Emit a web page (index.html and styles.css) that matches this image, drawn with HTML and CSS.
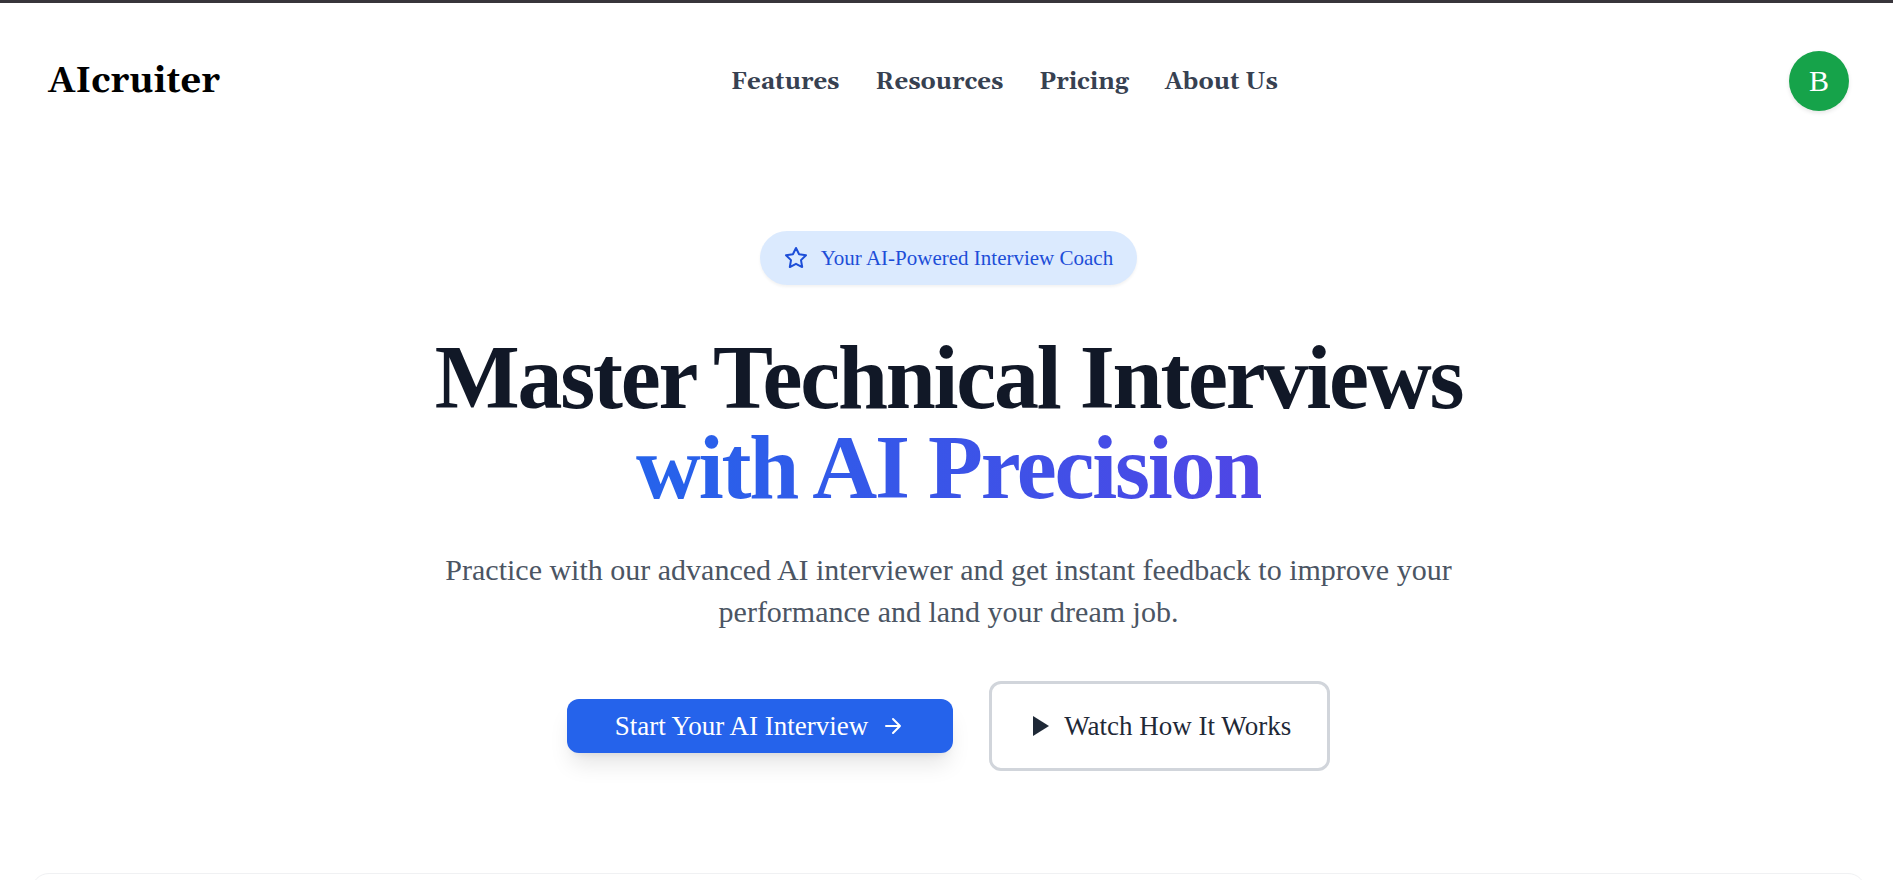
FILE: index.html
```html
<!DOCTYPE html>
<html lang="en">
<head>
<meta charset="utf-8">
<title>AIcruiter</title>
<link rel="stylesheet" href="styles.css">
</head>
<body>
<header class="header">
  <a class="logo" href="#">AIcruiter</a>
  <nav class="nav">
    <a href="#">Features</a>
    <a href="#">Resources</a>
    <a href="#">Pricing</a>
    <a href="#">About Us</a>
  </nav>
  <button class="avatar" type="button">B</button>
</header>
<main class="main">
  <section class="hero">
    <div class="badge">
      <svg class="star" viewBox="0 0 24 24" aria-hidden="true"><polygon points="12 2 15.09 8.26 22 9.27 17 14.14 18.18 21.02 12 17.77 5.82 21.02 7 14.14 2 9.27 8.91 8.26 12 2"/></svg>
      <span>Your AI-Powered Interview Coach</span>
    </div>
    <h1 class="title">Master Technical Interviews <span class="accent">with AI Precision</span></h1>
    <p class="lead">Practice with our advanced AI interviewer and get instant feedback to improve your performance and land your dream job.</p>
    <div class="actions">
      <button class="btn primary" type="button">Start Your AI Interview
        <svg class="arrow" viewBox="0 0 24 24" aria-hidden="true"><path d="M5 12h14M12 5l7 7-7 7"/></svg>
      </button>
      <button class="btn secondary" type="button">
        <svg class="play" viewBox="0 0 16 20" aria-hidden="true"><path d="M0 0l16 10L0 20z"/></svg>
        Watch How It Works</button>
    </div>
  </section>
  <section class="card"></section>
</main>
</body>
</html>
```
FILE: styles.css
```css
* { box-sizing: border-box; }
body {
  display: flex;
  flex-direction: column;
  margin: 0;
  height: 100vh;
  overflow: hidden;
  border-top: 3px solid #38353b;
  background: #fff;
  color: #111827;
  font-family: "Liberation Serif", "Times New Roman", serif;
}
button { font: inherit; border: 0; cursor: pointer; }
a { color: inherit; text-decoration: none; }
.header {
  display: flex;
  flex-shrink: 0;
  align-items: center;
  justify-content: space-between;
  padding: 48px 44px 48px 48px;
  font-family: Georgia, Gelasio, "Liberation Serif", serif;
  font-weight: 700;
}
.logo, .nav { padding-top: 2px; }
.logo { color: #000; font-size: 36px; line-height: 48px; }
.nav { display: flex; gap: 36px; color: #374151; font-size: 24px; line-height: 36px; }
.avatar {
  width: 60px;
  height: 60px;
  padding: 0;
  border-radius: 50%;
  background: #16a34a;
  color: #fff;
  font-family: "Liberation Serif", "Times New Roman", serif;
  font-size: 30px;
  font-weight: 400;
  box-shadow: 0 2px 4px rgba(0, 0, 0, .1);
}
.main {
  flex: 1;
  min-height: 0;
  padding: 72px 27px 0 31px;
  overflow: auto;
  scrollbar-width: none;
}
.hero {
  display: flex;
  flex-direction: column;
  align-items: center;
  text-align: center;
}
.badge {
  display: flex;
  align-items: center;
  gap: 13px;
  padding: 12px 24px;
  border-radius: 27px;
  background: #dbeafe;
  color: #1d4ed8;
  font-size: 21px;
  line-height: 30px;
  box-shadow: 0 2px 3px rgba(0, 0, 0, .05);
}
.star { width: 24px; height: 24px; }
.star, .arrow {
  fill: none;
  stroke: currentColor;
  stroke-width: 2;
  stroke-linecap: round;
  stroke-linejoin: round;
}
.title {
  margin: 48px 0 36px;
  font-size: 90px;
  line-height: 90px;
  letter-spacing: -0.025em;
}
.accent {
  display: block;
  width: fit-content;
  margin: 0 auto;
  background: linear-gradient(to right, #2563eb, #4f46e5);
  background-clip: text;
  color: transparent;
}
.lead {
  max-width: 1056px;
  margin: 0;
  color: #4b5563;
  font-size: 30px;
  line-height: 42px;
}
.actions { display: flex; align-items: center; gap: 36px; margin-top: 48px; }
.btn {
  display: flex;
  align-items: center;
  border-radius: 12px;
  font-size: 27px;
  line-height: 42px;
}
.primary {
  gap: 13px;
  padding: 6px 48px;
  background: #2563eb;
  color: #fff;
  box-shadow: 0 15px 22px -4px rgba(0, 0, 0, .1), 0 6px 9px -6px rgba(0, 0, 0, .1);
}
.arrow { width: 24px; height: 24px; }
.secondary {
  gap: 15px;
  padding: 21px 36px 21px 41px;
  border: 3px solid #d1d5db;
  background: #fff;
  color: #1f2937;
}
.play { width: 16px; height: 20px; fill: currentColor; }
.card {
  height: 300px;
  margin-top: 102px;
  border: 1px solid #f0f1f3;
  border-radius: 18px;
}
```
